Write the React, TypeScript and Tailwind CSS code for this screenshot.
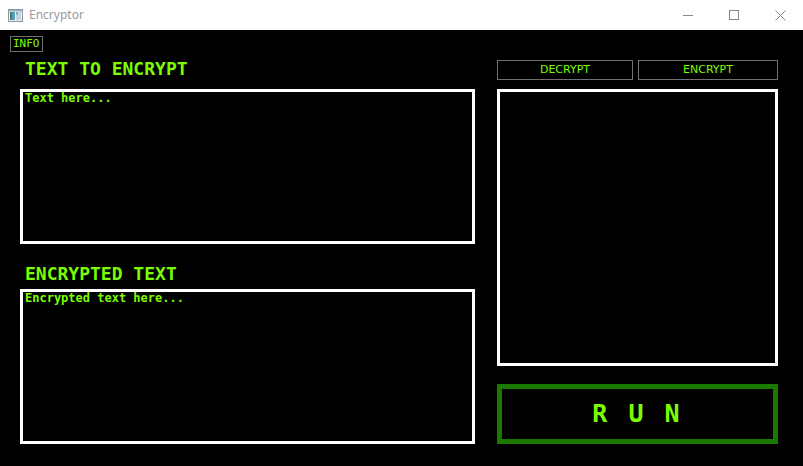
import React from "react";

const G = "text-[#7cfc00]";

export default function App() {
  return (
    <div className="w-[803px] h-[466px] overflow-hidden flex flex-col bg-black">
      {/* Title bar */}
      <div className="h-[30px] bg-white flex items-center shrink-0">
        <svg className="ml-[8px]" width="15" height="13" viewBox="0 0 15 13">
          <rect x="0.5" y="0.5" width="14" height="12" fill="#eef1f4" stroke="#8a96a3" />
          <rect x="2" y="3" width="5" height="8" fill="#5a9bb5" />
          <rect x="2" y="3" width="2" height="8" fill="#3d7f60" />
          <rect x="8" y="3" width="5" height="8" fill="#c7d4de" />
          <rect x="8" y="3" width="2" height="3" fill="#7fb0c9" />
          <rect x="1" y="1" width="13" height="1.5" fill="#9fb2c4" />
        </svg>
        <span
          className="ml-[6px] text-[12px] text-[#9a9a9a]"
          style={{ fontFamily: '"Noto Sans", "Open Sans", sans-serif' }}
        >
          Encryptor
        </span>
        <div className="ml-auto flex items-center h-full">
          <div className="w-[46px] h-full flex items-center justify-center">
            <svg width="10" height="10" viewBox="0 0 10 10">
              <line x1="0" y1="5.5" x2="10" y2="5.5" stroke="#888" strokeWidth="1" />
            </svg>
          </div>
          <div className="w-[46px] h-full flex items-center justify-center">
            <svg width="10" height="10" viewBox="0 0 10 10">
              <rect x="0.5" y="0.5" width="9" height="9" fill="none" stroke="#888" strokeWidth="1" />
            </svg>
          </div>
          <div className="w-[46px] h-full flex items-center justify-center">
            <svg width="11" height="11" viewBox="0 0 11 11">
              <line x1="0.5" y1="0.5" x2="10.5" y2="10.5" stroke="#888" strokeWidth="1" />
              <line x1="10.5" y1="0.5" x2="0.5" y2="10.5" stroke="#888" strokeWidth="1" />
            </svg>
          </div>
        </div>
      </div>

      {/* Body */}
      <div
        className="flex-1 bg-black flex flex-col"
        style={{ fontFamily: '"DejaVu Sans Mono", "Liberation Mono", monospace' }}
      >
        <div className="pl-[10px] pt-[6px] h-[30px]">
          <div
            className={`w-[33px] h-[16px] border border-[#707070] ${G} text-[11px] leading-[14px] pl-[2px]`}
          >
            INFO
          </div>
        </div>

        <div className="flex">
          {/* Left column */}
          <div className="ml-[20px] w-[455px] flex flex-col">
            <div className={`h-[29px] pl-[5px] text-[18px] font-bold leading-[18px] ${G}`}>
              TEXT TO ENCRYPT
            </div>
            <div className="h-[155px] border-[3px] border-white">
              <div className={`pl-[2px] text-[12px] font-bold leading-[12px] ${G}`}>Text here...</div>
            </div>
            <div className={`h-[45px] pl-[5px] pt-[21px] text-[18px] font-bold leading-[18px] ${G}`}>
              ENCRYPTED TEXT
            </div>
            <div className="h-[155px] border-[3px] border-white">
              <div className={`pl-[2px] text-[12px] font-bold leading-[12px] ${G}`}>Encrypted text here...</div>
            </div>
          </div>

          {/* Right column */}
          <div className="ml-[22px] w-[281px] flex flex-col">
            <div
              className="flex gap-[5px] h-[20px]"
              style={{ fontFamily: '"DejaVu Sans", "Liberation Sans", sans-serif' }}
            >
              <div
                className={`w-[136px] h-[20px] border border-[#707070] flex items-center justify-center text-[11px] ${G}`}
              >
                DECRYPT
              </div>
              <div
                className={`w-[140px] h-[20px] border border-[#707070] flex items-center justify-center text-[11px] ${G}`}
              >
                ENCRYPT
              </div>
            </div>
            <div className="mt-[9px] h-[277px] border-[3px] border-white" />
            <div
              className={`mt-[18px] h-[60px] border-[5px] border-[#1a7a00] flex items-center justify-center text-[25px] font-bold tracking-[3px] ${G}`}
            >
              R U N
            </div>
          </div>
        </div>
      </div>
    </div>
  );
}
